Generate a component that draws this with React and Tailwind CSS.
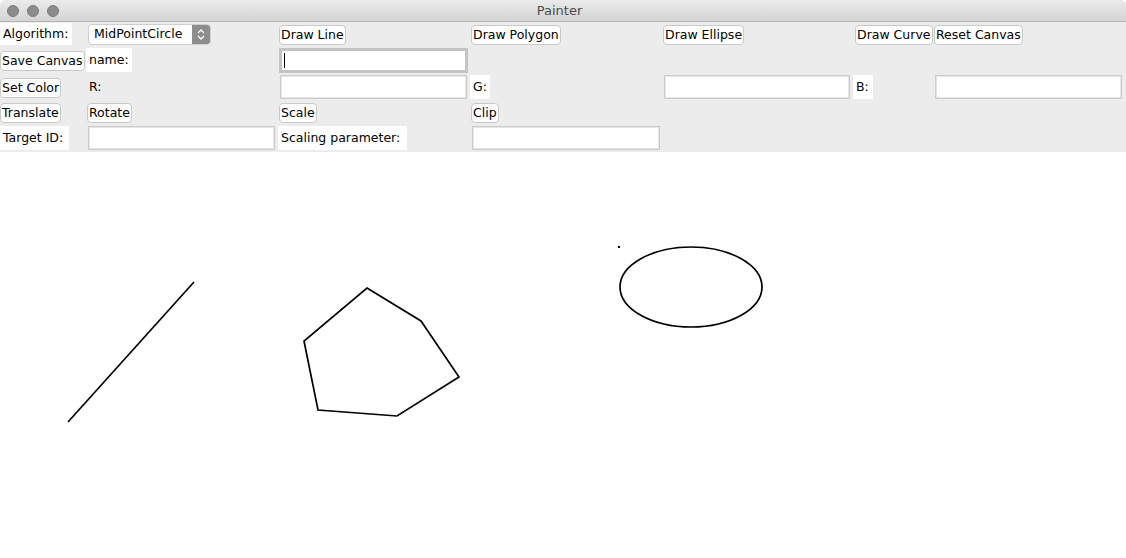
import { useState } from "react";

const font = { fontFamily: '"DejaVu Sans", "Liberation Sans", sans-serif' };

function Btn({ children }) {
  return (
    <button className="h-[20px] px-px bg-white border border-[#c9c9c9] rounded-[4px] text-[12.5px] leading-none text-black whitespace-nowrap">
      {children}
    </button>
  );
}

function Label({ children, className = "" }) {
  return (
    <div className={"bg-white px-[3px] flex items-center text-[12.5px] text-black whitespace-nowrap " + className}>
      {children}
    </div>
  );
}

function Entry({ focused, className = "" }) {
  if (focused) {
    return (
      <div className={"h-[25px] bg-white border-[3px] border-[#c4c4c4] flex items-center pl-[2px] " + className}>
        <div className="w-px h-[15px] bg-black" />
      </div>
    );
  }
  return <div className={"h-[24px] bg-white border-2 border-[#e6e6e6] outline outline-1 outline-[#cccccc] -outline-offset-1 " + className} />;
}

function Combo() {
  return (
    <div className="ml-[2px] h-[21px] w-[123px] bg-white border border-[#cfcfcf] rounded-[4px] flex items-center justify-between overflow-hidden">
      <span className="pl-[5px] text-[12.5px] text-black">MidPointCircle</span>
      <div className="h-full w-[18px] bg-[#8d8d8d] flex items-center justify-center">
        <svg width="8" height="13" viewBox="0 0 8 13">
          <path d="M1 5 L4 2 L7 5" fill="none" stroke="white" strokeWidth="1.3" />
          <path d="M1 8 L4 11 L7 8" fill="none" stroke="white" strokeWidth="1.3" />
        </svg>
      </div>
    </div>
  );
}

export default function App() {
  const [name] = useState("");
  return (
    <div className="w-[1126px] h-[558px] bg-white overflow-hidden" style={font}>
      {/* title bar */}
      <div className="h-[22px] bg-gradient-to-b from-[#ebebeb] to-[#d4d4d4] border-b border-[#b4b4b4] flex items-center relative rounded-t-[5px]">
        <div className="flex gap-[8px] pl-[7px]">
          <div className="w-[12px] h-[12px] rounded-full bg-[#8c8c8c] border border-[#7c7c7c]" />
          <div className="w-[12px] h-[12px] rounded-full bg-[#8c8c8c] border border-[#7c7c7c]" />
          <div className="w-[12px] h-[12px] rounded-full bg-[#8c8c8c] border border-[#7c7c7c]" />
        </div>
        <div className="flex-1 text-center text-[13px] text-[#4c4c4c] pr-[66px]">Painter</div>
      </div>

      {/* controls */}
      <div className="bg-[#ececec] grid grid-cols-[86px_191px_193px_192px_191px_80px_193px] grid-rows-[24px_28px_26px_24px_28px] items-center">
        {/* row 1 */}
        <Label className="h-[22px] w-[72px]">Algorithm:</Label>
        <Combo />
        <div className="pl-[2px]"><Btn>Draw Line</Btn></div>
        <div className="pl-[1px]"><Btn>Draw Polygon</Btn></div>
        <div className="pl-[1px]"><Btn>Draw Ellipse</Btn></div>
        <div className="pl-[2px]"><Btn>Draw Curve</Btn></div>
        <div className="pl-[1px]"><Btn>Reset Canvas</Btn></div>

        {/* row 2 */}
        <div><Btn>Save Canvas</Btn></div>
        <Label className="h-[24px] w-[46px]">name:</Label>
        <div className="pl-[2px] pr-[2px]"><Entry focused={!name} /></div>
        <div />
        <div />
        <div />
        <div />

        {/* row 3 */}
        <div><Btn>Set Color</Btn></div>
        <Label className="h-[24px] w-[19px] !bg-[#ececec]">R:</Label>
        <div className="pl-[3px] pr-[3px]"><Entry /></div>
        <Label className="h-[24px] w-[20px]">G:</Label>
        <div className="pl-[2px] pr-[3px]"><Entry /></div>
        <Label className="h-[24px] w-[20px]">B:</Label>
        <div className="pl-[2px] pr-[4px]"><Entry /></div>

        {/* row 4 */}
        <div><Btn>Translate</Btn></div>
        <div className="pl-[1px]"><Btn>Rotate</Btn></div>
        <div className="pl-[2px]"><Btn>Scale</Btn></div>
        <div className="pl-[1px]"><Btn>Clip</Btn></div>
        <div />
        <div />
        <div />

        {/* row 5 */}
        <Label className="h-[24px] w-[69px]">Target ID:</Label>
        <div className="pl-[2px] pr-[2px]"><Entry /></div>
        <Label className="h-[24px] w-[129px] ml-px">Scaling parameter:</Label>
        <div className="pl-[2px] pr-[2px]"><Entry /></div>
        <div />
        <div />
        <div />
      </div>

      {/* canvas */}
      <svg width="1126" height="406" className="block bg-white">
        <g fill="none" stroke="black" strokeWidth="1.7">
          <line x1="68" y1="270" x2="194" y2="130" />
          <polygon points="367,136 421,169 459,225 397,264 318,258 304,189" />
          <ellipse cx="691" cy="135" rx="71" ry="40" />
        </g>
        <rect x="618" y="94" width="2" height="2" fill="black" />
      </svg>
    </div>
  );
}
